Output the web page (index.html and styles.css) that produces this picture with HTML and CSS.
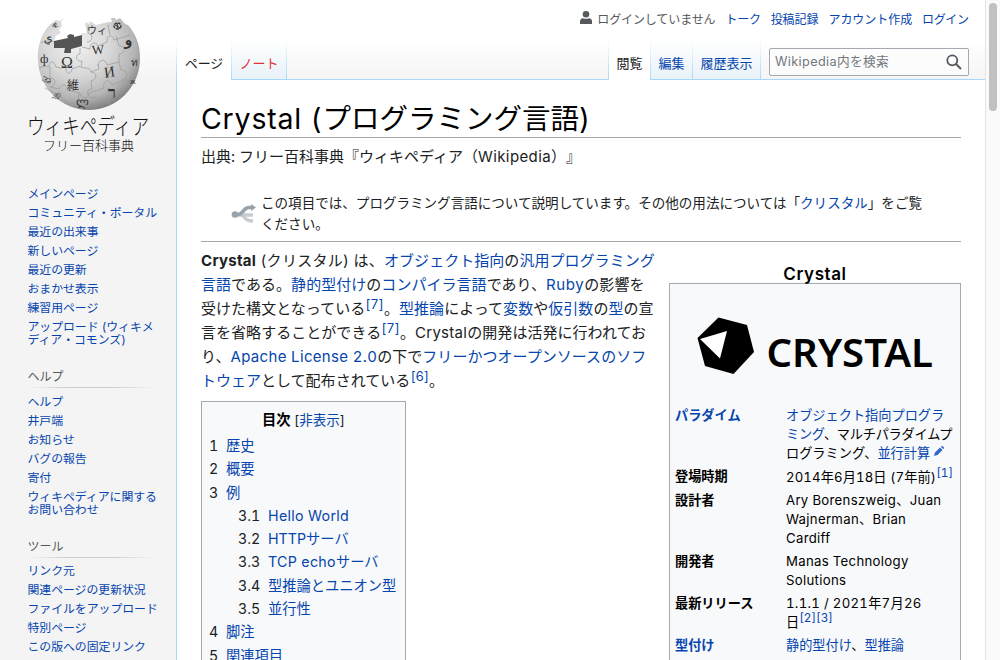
FILE: index.html
```html
<!DOCTYPE html>
<html lang="ja">
<head>
<meta charset="utf-8">
<title>Crystal (プログラミング言語) - Wikipedia</title>
<link rel="stylesheet" href="styles.css">
</head>
<body>
<div class="page">
  <aside class="sidebar">
    <a class="logo">
      <svg width="176" height="160" viewBox="0 0 176 160">
        <defs>
          <radialGradient id="ball" cx=".38" cy=".3" r=".72">
            <stop offset="0" stop-color="#f0f0f0"/><stop offset=".45" stop-color="#d8d8d8"/><stop offset=".8" stop-color="#b4b4b4"/><stop offset="1" stop-color="#808080"/>
          </radialGradient>
        </defs>
        <path fill="url(#ball)" d="M64 18L61 22L62 26L59 30L61 33L56 36L54 41L60 43L82 37L81 33L87 33L85 24L86 22L89 24L90 21L96 25C101 24 106 22 112 22L111 18L115 18L116 20L120 18L125 24L128 25C136 34 140 45 140 58A51.5 51.5 0 0 1 88.500 110A51 51 0 0 1 38 60C37 43 44 27 56 20L60 21Z"/>
        <path fill="#555" d="M54 41L68 38L67 36L70 34L74 35L74 37L82 35L82 46L71 49L71 53L64 53L65 48L54 48Z"/>
        <g fill="none" stroke="#9a9a9a" stroke-width=".7">
          <path d="M41 43Q47 39 54 42M39 68Q45 65 49 67C49 60 54 60 56 67Q61 69 66 67C65 75 71 75 72 69L80 66M80 48V54C75 54 75 62 82 61L81 67C87 69 90 67 91 72C98 72 97 80 91 81L92 89L88 90C86 98 93 99 97 96M82 47L90 49C90 42 96 41 98 46L107 42C106 35 113 34 114 40L130 35"/>
          <path d="M50 67L50 78C57 78 56 86 50 87M50 87L59 89C62 82 68 85 67 90L80 93C80 99 89 99 89 93L104 88C102 80 109 78 112 85L124 80M98 66C99 58 106 59 107 65L119 62L119 54C126 53 126 45 119 46L116 36M119 62L121 70C129 70 128 79 122 80M88 25V33C94 34 93 42 87 42M45 88L60 96L72 106M79 93L77 108M108 88L109 106M132 58L139 60M124 80L135 81M108 25L110 35M91 72L99 69L98 64"/>
        </g>
        <g class="globe-letters">
          <text x="61" y="68" font-size="16">Ω</text><text x="92" y="54" font-size="13" transform="rotate(-5 98 50)">W</text><text x="104" y="77" font-size="15" transform="rotate(-8 110 72)">И</text>
          <text x="67" y="90" font-size="12">維</text><text x="87" y="34" font-size="10">ウィ</text><text x="108" y="98" font-size="16" font-weight="700">ר</text>
          <ellipse cx="117.500" cy="26" rx="3.500" ry="3" fill="none" stroke="#333" stroke-width="1.300" stroke-dasharray="3 .8"/><path d="M115 25L120 28M117 23L118 29" stroke="#333"/>
          <text x="125" y="45" font-size="15" font-weight="700">و</text>
          <text x="43" y="42" font-size="12" transform="rotate(-15 47 40)">ي</text><text x="40" y="63" font-size="13">ф</text><text x="41" y="82" font-size="11" transform="rotate(25 45 80)">အ</text><text x="131" y="66" font-size="10">ท</text><text x="53" y="99" font-size="8" transform="rotate(35 57 97)">நி</text><text x="130" y="84" font-size="8">ж</text><text x="76" y="106" font-size="12">ლ</text><text x="52" y="28" font-size="8" transform="rotate(-35 55 25)">ዊ</text>
        </g>
        <text class="wordmark" x="27" y="134" font-size="22" textLength="122" lengthAdjust="spacingAndGlyphs">ウィキペディア</text>
        <text class="wordmark" x="43" y="150" font-size="13" textLength="91">フリー百科事典</text>
      </svg>
    </a>
    <ul class="nav">
      <li>メインページ</li><li>コミュニティ・ポータル</li><li>最近の出来事</li><li>新しいページ</li><li>最近の更新</li><li>おまかせ表示</li><li>練習用ページ</li><li>アップロード (ウィキメ<br>ディア・コモンズ)</li>
    </ul>
    <h3>ヘルプ</h3>
    <ul class="nav">
      <li>ヘルプ</li><li>井戸端</li><li>お知らせ</li><li>バグの報告</li><li>寄付</li><li>ウィキペディアに関する<br>お問い合わせ</li>
    </ul>
    <h3 class="tools">ツール</h3>
    <ul class="nav">
      <li>リンク元</li><li>関連ページの更新状況</li><li>ファイルをアップロード</li><li>特別ページ</li><li>この版への固定リンク</li>
    </ul>
  </aside>
  <div class="main">
    <header class="head">
      <div class="personal">
        <span class="user"><svg width="12" height="13" viewBox="0 0 12 13"><circle cx="6" cy="3.300" r="3.300" fill="#54595d"/><path fill="#54595d" d="M0 13V10.500Q0 7.500 3 7.300Q6 8.300 9 7.300Q12 7.500 12 10.500V13Z"/></svg><span class="anon">ログインしていません</span></span>
        <a>トーク</a><a>投稿記録</a><a>アカウント作成</a><a class="login">ログイン</a>
      </div>
      <div class="tabs">
        <span class="tab on first">ページ</span><span class="tab red">ノート</span>
        <span class="fill"></span>
        <span class="tab on view">閲覧</span><span class="tab edit">編集</span><span class="tab hist">履歴表示</span>
        <div class="searchwrap"><div class="search"><span>Wikipedia内を検索</span><svg width="16" height="16" viewBox="0 0 16 16" fill="none" stroke="#54595d" stroke-width="1.800"><circle cx="6.300" cy="6.300" r="5"/><path d="M10 10L15 15" stroke-width="2"/></svg></div></div>
      </div>
    </header>
    <main class="content">
      <h1><span class="t-lat">Crystal (</span>プログラミング言語)</h1>
      <div class="from">出典: フリー百科事典『ウィキペディア（<span class="wiki">Wikipedia</span>）』</div>
      <div class="hatnote">
        <svg width="26" height="20" viewBox="0 0 26 20" fill="none"><path d="M7 11H10C14 11 12 17 22 17M11 11H22" stroke="#c8ccd1" stroke-width="3.500"/><path d="M3 10.500H7C13 10 12 3.500 18 3.500H21" stroke="#9aa2aa" stroke-width="3.500"/><circle cx="4" cy="10.500" r="3.300" fill="#9aa2aa"/><path d="M20 0L25 3.500L20 7Z" fill="#9aa2aa"/></svg>
        <p>この項目では、プログラミング言語について説明しています。その他の用法については「<a>クリスタル</a>」をご覧<br>ください。</p>
      </div>
      <div class="cols">
        <div class="article">
          <p><span class="l1"><b>Crystal</b> (クリスタル) は、</span><a>オブジェクト指向</a>の<a>汎用プログラミング</a><br><a>言語</a>である。<a>静的型付け</a>の<a>コンパイラ言語</a>であり、<a class="ruby">Ruby</a>の影響を<br>受けた構文となっている<sup>[7]</sup>。<a>型推論</a>によって<a>変数</a>や<a>仮引数</a>の<a>型</a>の宣<br>言を省略することができる<sup>[7]</sup>。<span class="lat">Crystal</span>の開発は活発に行われてお<br>り、<a class="apache">Apache License 2.0</a>の下で<a>フリーかつオープンソースのソフ</a><br><a>トウェア</a>として配布されている<sup>[6]</sup>。</p>
          <div class="toc">
            <div class="toctitle"><b>目次</b> [<a>非表示</a>]</div>
            <ul>
              <li><span>1</span><a>歴史</a></li><li><span>2</span><a>概要</a></li><li><span>3</span><a>例</a></li>
              <li class="sub"><span>3.1</span><a class="lat">Hello World</a></li><li class="sub"><span>3.2</span><a>HTTPサーバ</a></li><li class="sub"><span>3.3</span><a><span class="lat">TCP echo</span>サーバ</a></li><li class="sub"><span>3.4</span><a>型推論とユニオン型</a></li><li class="sub"><span>3.5</span><a>並行性</a></li>
              <li><span>4</span><a>脚注</a></li><li><span>5</span><a>関連項目</a></li>
            </ul>
          </div>
        </div>
        <div class="infocol">
          <div class="caption">Crystal</div>
          <div class="infobox">
            <svg class="crystal" width="290" height="121" viewBox="670 284 290 121">
              <path d="M718.500 317.500L747 325L754 352L733.500 374L705 366L697.500 338Z"/><path d="M700 339L727 331L720 358.500Z" fill="#fff"/>
              <text x="766.500" y="366.500" font-size="40" textLength="166.500" lengthAdjust="spacingAndGlyphs">CRYSTAL</text>
            </svg>
            <dl>
              <dt><a>パラダイム</a></dt><dd><a>オブジェクト指向プログラ</a><br><span class="tight"><a>ミング</a>、マルチパラダイムプ</span><br>ログラミング、<a>並行計算</a><svg class="pencil" width="10" height="10" viewBox="0 0 10 10" fill="#36c"><path d="M0 10L1 6.500L6 1.500L8.500 4L3.500 9Z"/><path d="M6.800 .8L8 0Q10 .5 10 2L9.300 3.200Z"/></svg></dd>
              <dt>登場時期</dt><dd class="dn date">2014年6月18日 (7年前)<sup>[1]</sup></dd>
              <dt>設計者</dt><dd class="lat">Ary Borenszweig、Juan<br>Wajnerman、Brian<br>Cardiff</dd>
              <dt>開発者</dt><dd class="lat">Manas Technology<br>Solutions</dd>
              <dt>最新リリース</dt><dd><span class="date rel">1.1.1 / 2021年7月26</span><br>日<sup>[2][3]</sup></dd>
              <dt><a>型付け</a></dt><dd><a>静的型付け</a>、<a>型推論</a></dd>
            </dl>
          </div>
        </div>
      </div>
    </main>
  </div>
  <div class="scrollbar"><div class="thumb"></div></div>
</div>
</body>
</html>
```
FILE: styles.css
```css
* { box-sizing: border-box; }
body { margin: 0; height: 660px; overflow: hidden; color: #202122; font-family: Inter, "Noto Sans CJK JP", sans-serif; font-size: 15px; font-variant-numeric: tabular-nums; text-spacing-trim: space-all; }
a, sup { color: #0645ad; text-decoration: none; }
ul, dl, dd, p, h1, h3 { margin: 0; padding: 0; list-style: none; }
svg { display: block; flex: none; }
.page { display: flex; width: 1000px; height: 660px; overflow: hidden; white-space: nowrap; }

.sidebar { width: 176px; flex: none; background: linear-gradient(#fff 40px, #f4f4f4 80px); }
.logo { display: block; height: 184px; }
.globe-letters { font-family: "Liberation Serif", "Noto Sans CJK JP", serif; fill: #333; }
.wordmark { font-family: "Noto Sans CJK JP", sans-serif; font-weight: 300; fill: #111; }
.nav { padding-left: 27.500px; font-size: 11.9px; letter-spacing: -.05px; color: #0645ad; }
.nav li { line-height: 13px; padding: 3px 0; }
.sidebar h3 { margin: 18px 22px 4px 27.500px; height: 21px; line-height: 20px; font-size: 12px; font-weight: 400; color: #54595d; border-bottom: 1px solid; border-image: linear-gradient(90deg, rgba(200,204,209,0), #c8ccd1 33%, #c8ccd1 66%, rgba(200,204,209,0)) 1; }
.sidebar .tools { margin-bottom: 3px; }

.main { width: 809px; flex: none; height: 660px; }
.head { height: 80px; background: linear-gradient(#fff 40px, #f4f4f4 80px); }
.personal { height: 40px; display: flex; justify-content: flex-end; gap: 10px; padding-right: 16.500px; font-size: 12px; line-height: 39px; }
.user { display: flex; gap: 5px; color: #54595d; }
.user svg { margin-top: 11px; }
.anon { letter-spacing: -.1px; }
.personal a { letter-spacing: -.05px; }
.personal .login { letter-spacing: -.4px; }
.personal a:nth-child(2) { letter-spacing: -.3px; }
.tabs { height: 40px; display: flex; font-size: 13px; line-height: 47px; }
.tab { border-right: 1px solid; border-bottom: 1px solid #a7d7f9; border-image: linear-gradient(#fff, #a7d7f9) 1; text-align: center; width: 55px; background: linear-gradient(#fff, #e8f2f8); color: #0645ad; flex: none; }
.tab.on { color: #202122; background: #fff; border-bottom: 0; }
.tab.first { width: 56px; border-left: 1px solid; }
.tab.red { color: #dd3333; }
.tab.view { width: 43px; border-left: 1px solid; }
.tab.edit { width: 42px; }
.tab.hist { width: 68px; }
.fill { flex: 1; border-bottom: 1px solid #a7d7f9; }
.searchwrap { width: 224px; padding: 8px 16px 0 8px; border-bottom: 1px solid #a7d7f9; }
.search { height: 28px; width: 200px; border: 1px solid #a2a9b1; border-radius: 2px; background: rgba(255,255,255,.5); display: flex; justify-content: space-between; align-items: center; padding: 0 6px 0 5px; color: #72777d; line-height: 24px; font-size: 12.700px; letter-spacing: .35px; }

.content { border-left: 1px solid #a7d7f9; height: 580px; padding: 20px 24px 0; background: #fff; overflow: hidden; }
h1 { height: 38px; line-height: 37px; border-bottom: 1px solid #a2a9b1; font-size: 28.500px; font-weight: 400; color: #000; }
.t-lat { letter-spacing: .8px; }
.from { height: 55px; line-height: 38px; }
.wiki { letter-spacing: .4px; }
.hatnote { height: 49px; border-bottom: 1px solid #a2a9b1; padding-left: 30px; display: flex; gap: 4px; font-size: 13.560px; line-height: 21px; }
.hatnote svg { margin-top: 11px; }
.cols { display: flex; gap: 14px; }
.article { width: 454px; flex: none; padding-top: 6.500px; }
.article > p { line-height: 24px; letter-spacing: .04px; }
.article p .l1 { letter-spacing: .28px; }
.lat { letter-spacing: .3px; }
.ruby { letter-spacing: .6px; }
.article .apache { letter-spacing: .33px; }
sup { font-size: 13px; line-height: 0; vertical-align: 5px; }
.toc { margin-top: 8.500px; width: 205px; height: 300px; border: 1px solid #a2a9b1; background: #f8f9fa; padding: 6px 8px 6px 7px; font-size: 14.250px; }
.toctitle { text-align: center; line-height: 23px; font-size: 13.500px; margin-bottom: 2px; padding-left: 1px; }
.toctitle b { font-size: 14.250px; color: #000; }
.toc li { display: flex; gap: 8px; line-height: 23.300px; }
.toc li span:first-child { width: 9px; }
.toc .sub { padding-left: 29px; }
.toc li.sub span:first-child { width: 22px; }
.infocol { width: 292px; flex: none; }
.caption { height: 41px; padding-top: 22px; line-height: 20px; text-align: center; font-weight: 600; font-size: 17px; letter-spacing: .6px; color: #000; }
.infobox { border: 1px solid #a2a9b1; background: #f8f9fa; height: 400px; color: #000; }
.crystal text { font-family: "Noto Sans", sans-serif; font-weight: 600; }
dl { display: grid; grid-template-columns: 111px 1fr; row-gap: 4px; padding: 1px 0 0 5px; font-size: 13.200px; line-height: 19px; }
dt { font-weight: 700; }
.dn { padding-top: 1px; }
.tight { letter-spacing: -.25px; }
.date { letter-spacing: .12px; }
.rel { letter-spacing: .28px; }
dl sup { font-size: 11.800px; letter-spacing: 0; }
.pencil { display: inline-block; margin-left: 4px; vertical-align: 2px; }
.scrollbar { width: 15px; background: #fafafa; border-left: 1px solid #e5e5e5; padding: 3px 3px; }
.thumb { width: 8px; height: 108px; border-radius: 4px; background: #c1c1c1; }
```
